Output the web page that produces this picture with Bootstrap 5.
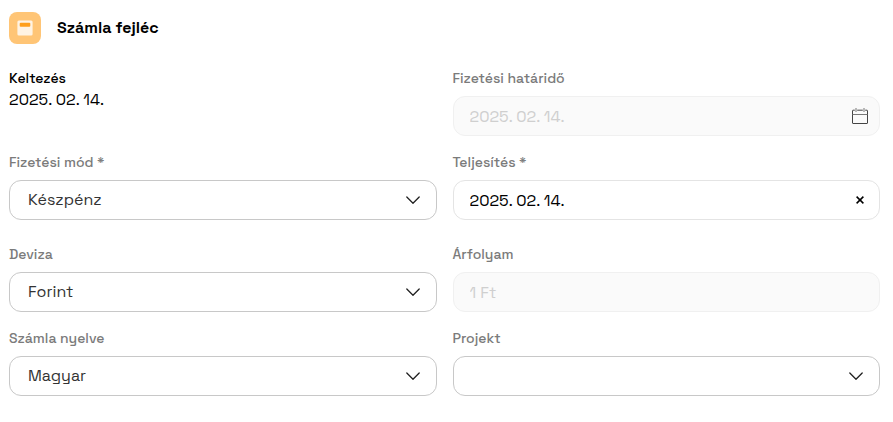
<!DOCTYPE html>
<html lang="hu">
<head>
<meta charset="utf-8">
<meta name="viewport" content="width=device-width, initial-scale=1">
<title>Számla fejléc</title>
<link href="https://cdn.jsdelivr.net/npm/bootstrap@5.3.0/dist/css/bootstrap.min.css" rel="stylesheet">
<style>
body { font-family: "Space Grotesk", Inter, "Liberation Sans", sans-serif; font-size: 16px; line-height: 24px; color: #000; background: #fff; }
.invoice-head { padding: 12px 13px 24px 9px; }
.head-icon { width: 32px; height: 32px; border-radius: 8px; background: #ffc576; }
.head-title { font-size: 16px; line-height: 24px; font-weight: 600; }
.field-label { display: block; font-size: 14px; line-height: 20px; font-weight: 500; color: #7b7b7b; margin-bottom: 8px; }
.static-label { color: #000; margin-bottom: 0; }
.field-box { height: 40px; border: 1px solid #e4e4e4; border-radius: 12px; background-color: #fff; }
.field-box.is-off { background-color: #fafafa; border-color: #f0f0f0; }
.field-box .form-control { padding: 2px 0 0 16px; font-size: 16px; line-height: 24px; color: #000; background: transparent; }
.field-box .form-control:disabled { color: #cfcfcf; opacity: 1; }
.field-btn { width: 38px; color: #333; }
.field-btn:disabled { opacity: 1; border: 0; color: #444; }
.form-select.field-select { height: 40px; padding: 0 40px 0 18px; border: 1px solid #c8c8c8; border-radius: 12px; color: #333; font-size: 16px; line-height: 24px;
  background-image: url("data:image/svg+xml,%3Csvg xmlns='http://www.w3.org/2000/svg' viewBox='0 0 16 16'%3E%3Cpath fill='none' stroke='%23222' stroke-width='1.3' stroke-linecap='round' stroke-linejoin='round' d='M1.8 5 8 11.2 14.2 5'/%3E%3C/svg%3E");
  background-size: 16px 16px; background-position: right 15px center; }
</style>
</head>
<body>
<main class="container-fluid invoice-head">
  <header class="d-flex align-items-center gap-3 mb-4">
    <span class="head-icon d-flex align-items-center justify-content-center flex-shrink-0">
      <svg width="16" height="16" viewBox="0 0 16 16" aria-hidden="true"><rect x=".4" y=".4" width="15.2" height="15.2" rx="1.5" fill="#fff3e3"/><rect x="2.7" y="2.8" width="10.6" height="4" rx="1" fill="#ff9f1c"/></svg>
    </span>
    <h1 class="head-title mb-0">Számla fejléc</h1>
  </header>
  <form>
    <div class="row gx-3 mb-3">
      <div class="col-6">
        <div class="field-label static-label">Keltezés</div>
        <div>2025. 02. 14.</div>
      </div>
      <div class="col-6">
        <label class="field-label" for="due">Fizetési határidő</label>
        <div class="field-box is-off d-flex">
          <input class="form-control border-0 shadow-none" id="due" type="text" value="2025. 02. 14." disabled>
          <button class="btn field-btn p-0 d-flex align-items-center justify-content-center flex-shrink-0" type="button" aria-label="Naptár" disabled>
            <svg width="16" height="16" viewBox="0 0 16 16" fill="none" stroke="currentColor" aria-hidden="true"><path d="M2.8 2.2H1a.5.5 0 0 0-.5.5V15a.5.5 0 0 0 .5.5h14a.5.5 0 0 0 .5-.5V2.7a.5.5 0 0 0-.5-.5h-1.8M5.2 2.2h5.6"/><path d="M.5 6.5h15M4 0v4M12 0v4" stroke="#777"/></svg>
          </button>
        </div>
      </div>
    </div>
    <div class="row gx-3 mb-4">
      <div class="col-6">
        <label class="field-label" for="method">Fizetési mód *</label>
        <select class="form-select field-select" id="method"><option>Készpénz</option></select>
      </div>
      <div class="col-6">
        <label class="field-label" for="done">Teljesítés *</label>
        <div class="field-box d-flex">
          <input class="form-control border-0 shadow-none" id="done" type="text" value="2025. 02. 14.">
          <button class="btn field-btn p-0 border-0 d-flex align-items-center justify-content-center flex-shrink-0" type="button" aria-label="Törlés">
            <svg width="8" height="8" viewBox="0 0 8 8" aria-hidden="true"><path d="M.6.6l6.8 6.8M7.4.6.6 7.4" stroke="#000" stroke-width="1.5"/></svg>
          </button>
        </div>
      </div>
    </div>
    <div class="row gx-3 mb-3">
      <div class="col-6">
        <label class="field-label" for="currency">Deviza</label>
        <select class="form-select field-select" id="currency"><option>Forint</option></select>
      </div>
      <div class="col-6">
        <label class="field-label" for="rate">Árfolyam</label>
        <div class="field-box is-off d-flex">
          <input class="form-control border-0 shadow-none" id="rate" type="text" value="1 Ft" disabled>
        </div>
      </div>
    </div>
    <div class="row gx-3">
      <div class="col-6">
        <label class="field-label" for="language">Számla nyelve</label>
        <select class="form-select field-select" id="language"><option>Magyar</option></select>
      </div>
      <div class="col-6">
        <label class="field-label" for="project">Projekt</label>
        <select class="form-select field-select" id="project"><option></option></select>
      </div>
    </div>
  </form>
</main>
<script src="https://cdn.jsdelivr.net/npm/bootstrap@5.3.0/dist/js/bootstrap.bundle.min.js"></script>
</body>
</html>
